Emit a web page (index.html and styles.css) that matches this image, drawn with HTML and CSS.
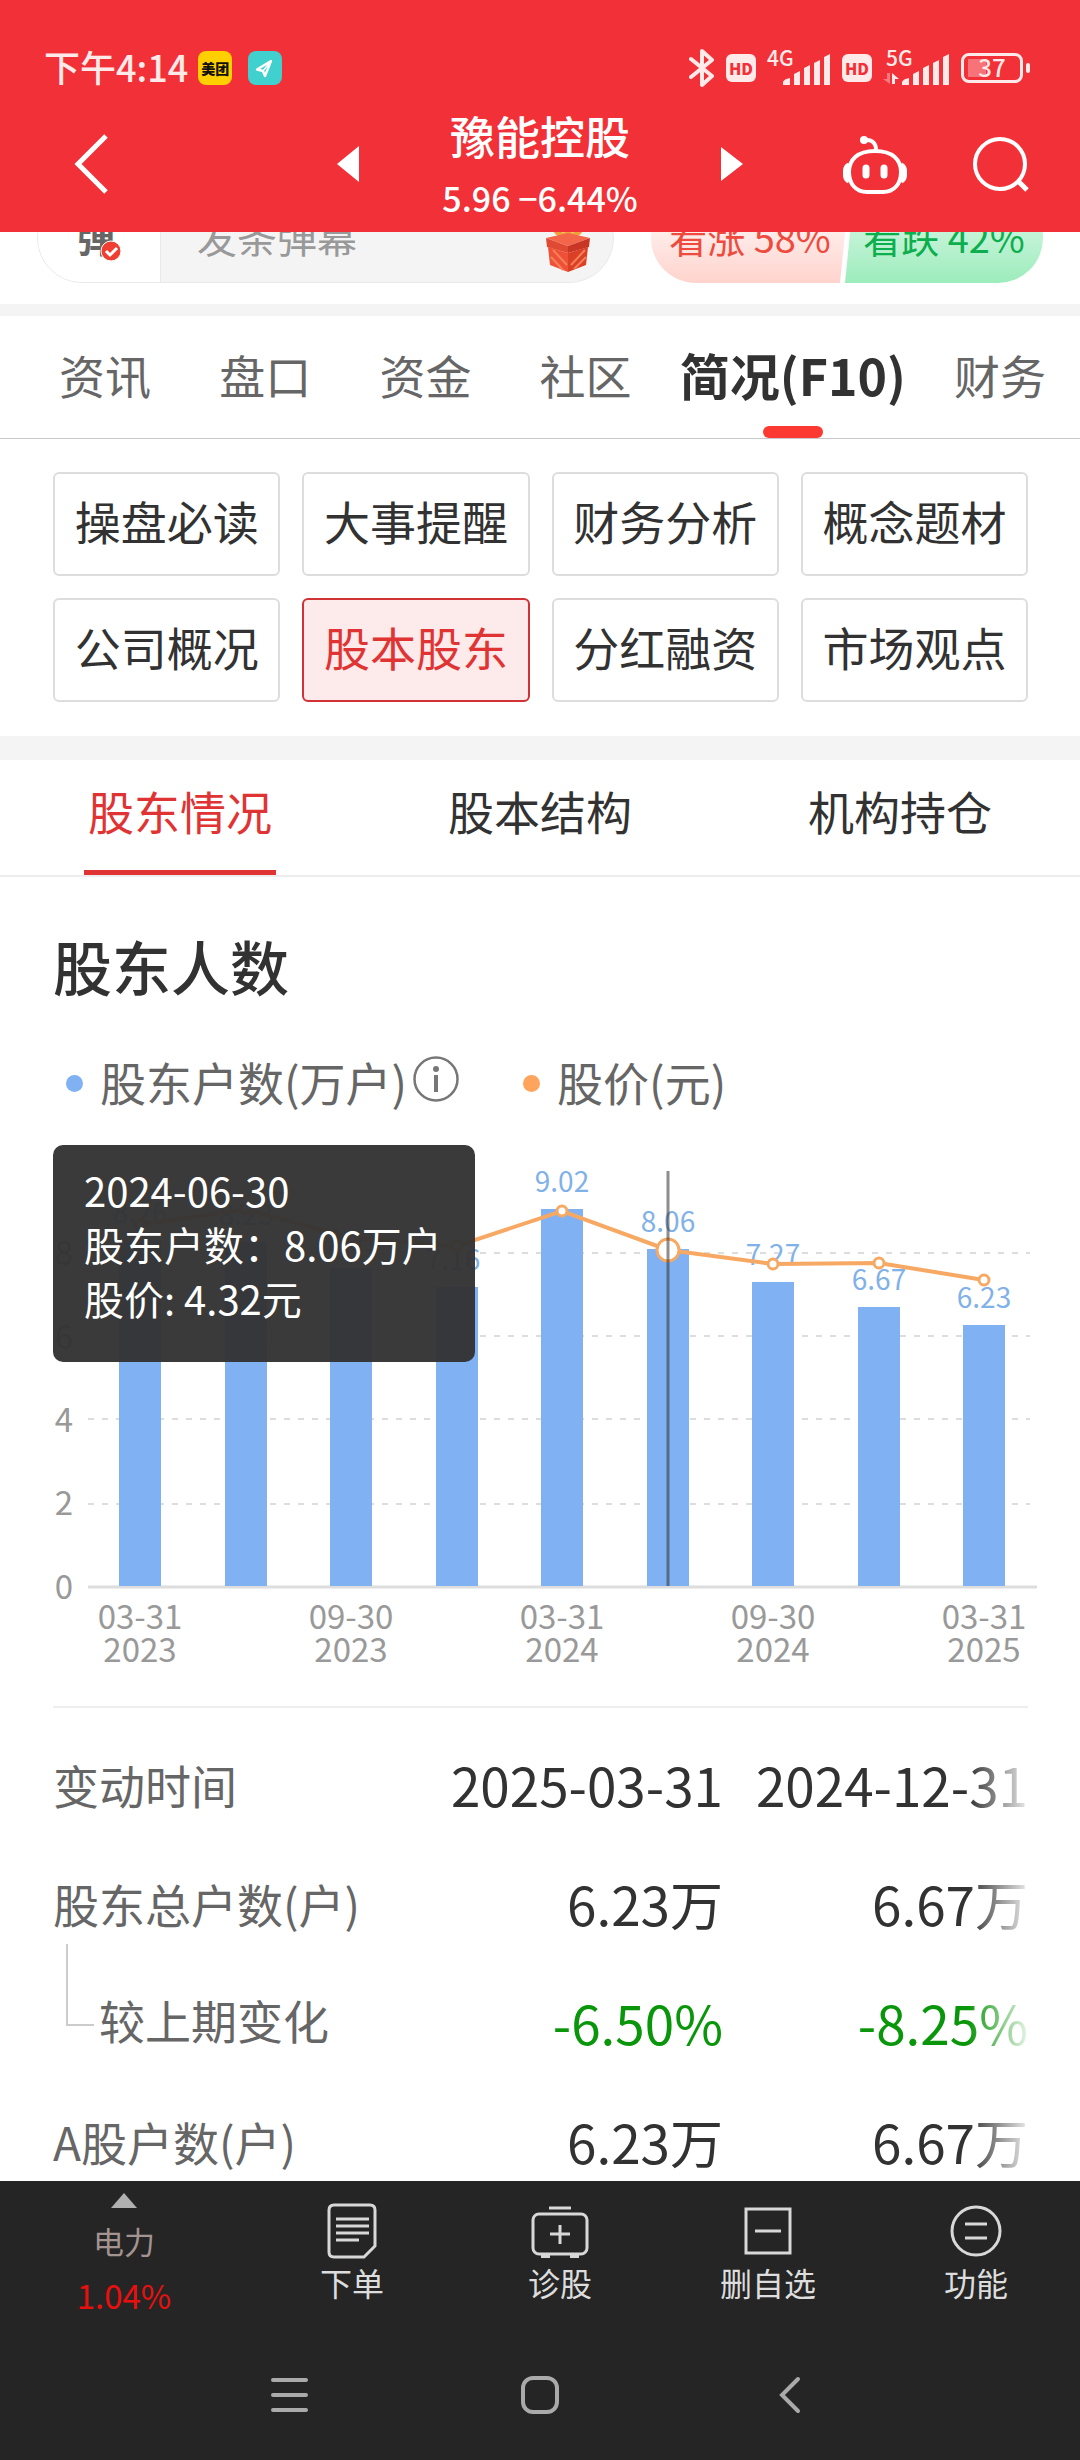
FILE: index.html
```html
<!doctype html>
<html lang="zh-CN">
<head>
	<meta charset="UTF-8">
	<meta name="viewport" content="width=device-width">
	<title>豫能控股</title>
	<link rel="stylesheet" href="styles.css">
</head>
<body>
	<div class="app">
		<header class="header">
			<div class="status">
				<div class="status-left">
					<span class="time">下午4:14</span>
					<span class="app-icon meituan">美团</span>
					<span class="app-icon plane">
						<svg width="34" height="34" viewBox="0 0 34 34"><path d="M23 10L9 18.500l6 1.500 2 5z" fill="none" stroke="#fff" stroke-width="2.400" stroke-linejoin="round"/><path d="M23 10l-8 10" stroke="#fff" stroke-width="1.500"/></svg>
					</span>
				</div>
				<div class="status-right">
					<svg width="26" height="40" viewBox="0 0 26 40"><path d="M2 11l21 17-10 9V3l10 9L2 29" fill="none" stroke="#ffe9e9" stroke-width="4" stroke-linejoin="round" stroke-linecap="round"/></svg>
					<span class="hd">HD</span>
					<svg class="signal" width="64" height="38" viewBox="0 0 64 38">
						<text x="0" y="17">4G</text>
						<path d="M16 36v-3q1-3 7-4v7zM27 36V25l6-3v14zM37 36V19l6-3v20zM47 36V14l6-3v25zM57 36V8l6-3v31z"/>
					</svg>
					<span class="hd">HD</span>
					<svg class="signal" width="67" height="38" viewBox="0 0 67 38">
						<text x="3" y="17">5G</text>
						<path d="M4 24h3v11L0 30h4z" opacity=".4"/>
						<path d="M9 35V24l7 6h-4v5z"/>
						<path d="M19 36v-3q1-3 7-4v7zM30 36V25l6-3v14zM40 36V19l6-3v20zM50 36V14l6-3v25zM60 36V8l6-3v31z"/>
					</svg>
					<span class="battery">37</span>
				</div>
			</div>
			<div class="title-bar">
				<button class="icon-btn back" aria-label="返回">
					<svg width="36" height="62" viewBox="0 0 36 62"><path d="M33 3L5 31l28 28" fill="none" stroke="#fff" stroke-width="5"/></svg>
				</button>
				<div class="stock">
					<button class="icon-btn" aria-label="上一只">
						<svg width="22" height="36" viewBox="0 0 22 36"><path d="M22 0v36L0 18z" fill="#fff"/></svg>
					</button>
					<div class="stock-info">
						<h1>豫能控股</h1>
						<p>5.96 −6.44%</p>
					</div>
					<button class="icon-btn" aria-label="下一只">
						<svg width="22" height="34" viewBox="0 0 22 34"><path d="M0 0v34l22-17z" fill="#fff"/></svg>
					</button>
				</div>
				<div class="tools">
					<button class="icon-btn" aria-label="智能助手">
						<svg width="64" height="60" viewBox="0 0 64 60" fill="none" stroke="#fff" stroke-width="4">
							<path d="M32 16C14 16 6 25 6 37s7 20 18 20h16c11 0 18-8 18-20S50 16 32 16z"/>
							<path d="M6 30c-5 2-5 14 0 16M58 30c5 2 5 14 0 16" stroke-width="5"/>
							<path d="M33 15c0-7-4-10-9-10"/>
							<circle cx="21" cy="5" r="4" fill="#fff" stroke="none"/>
							<path d="M23 33v7M41 33v7" stroke-width="7" stroke-linecap="round"/>
						</svg>
					</button>
					<button class="icon-btn" aria-label="搜索">
						<svg width="56" height="58" viewBox="0 0 56 58" fill="none" stroke="#fff" stroke-width="4"><circle cx="27" cy="29" r="25"/><path d="M45 46l9 9" stroke-width="5"/></svg>
					</button>
				</div>
			</div>
		</header>

		<main class="main">
			<div class="danmu">
				<div class="danmu-box">
					<button class="danmu-toggle" aria-label="弹幕开关">弹
						<svg class="check" width="22" height="22" viewBox="0 0 22 22"><circle cx="11" cy="11" r="10" fill="#ef3e32" stroke="#fff" stroke-width="1"/><path d="M6 11l4 4 7-7" fill="none" stroke="#fff" stroke-width="3"/></svg>
					</button>
					<input type="text" placeholder="发条弹幕" aria-label="发条弹幕">
					<svg class="gift" width="44" height="60" viewBox="0 0 44 60">
						<path d="M22 23C6 25 6 8 15 12l7 9 7-9c9-4 9 13-7 11z" fill="none" stroke="#f0a03a" stroke-width="5"/>
						<path d="M0 26l22-5 22 5-22 8z" fill="#f4664a"/>
						<path d="M0 26l22 8v7L1 35z" fill="#e04a33"/>
						<path d="M44 26l-22 8v7l21-6z" fill="#c93626"/>
						<path d="M2 35l20 6v19L4 53z" fill="#ef5138"/>
						<path d="M42 35l-20 6v19l18-7z" fill="#db3f26"/>
						<path d="M5 45l12 13M7 38l14 15M39 38L25 53M40 45L28 57" stroke="#f58057" stroke-width="2"/>
					</svg>
				</div>
				<div class="vote">
					<button class="vote-up">看涨 58%</button>
					<button class="vote-down">看跌 42%</button>
				</div>
			</div>

			<nav class="tabs">
				<a href="#">资讯</a>
				<a href="#">盘口</a>
				<a href="#">资金</a>
				<a href="#">社区</a>
				<a href="#" class="active">简况(F10)</a>
				<a href="#">财务</a>
			</nav>

			<div class="menu">
				<button>操盘必读</button>
				<button>大事提醒</button>
				<button>财务分析</button>
				<button>概念题材</button>
				<button>公司概况</button>
				<button class="active">股本股东</button>
				<button>分红融资</button>
				<button>市场观点</button>
			</div>

			<nav class="sub-tabs">
				<a href="#" class="active">股东情况</a>
				<a href="#">股本结构</a>
				<a href="#">机构持仓</a>
			</nav>

			<section class="holders">
				<h2>股东人数</h2>
				<div class="legend">
					<span class="dot blue"></span>
					<span class="label">股东户数(万户)</span>
					<button class="icon-btn info" aria-label="说明">
						<svg width="46" height="46" viewBox="0 0 46 46"><circle cx="23" cy="23" r="21.500" fill="none" stroke="#777" stroke-width="2.500"/><circle cx="23" cy="13" r="3" fill="#777"/><path d="M23 19v17" stroke="#777" stroke-width="4"/></svg>
					</button>
					<span class="dot orange"></span>
					<span class="label">股价(元)</span>
				</div>

				<div class="chart">
					<svg viewBox="0 0 1080 540">
						<g class="grid">
							<path d="M88 108h942M88 191h942M88 274h942M88 359h942"/>
						</g>
						<path class="axis" d="M88 442h949"/>
						<g class="bars">
							<rect x="119" y="95" width="42" height="346"/>
							<rect x="225" y="97" width="42" height="344"/>
							<rect x="330" y="123" width="42" height="318"/>
							<rect x="436" y="142" width="42" height="299"/>
							<rect x="541" y="64" width="42" height="377"/>
							<rect x="647" y="104" width="42" height="337"/>
							<rect x="752" y="137" width="42" height="304"/>
							<rect x="858" y="162" width="42" height="279"/>
							<rect x="963" y="180" width="42" height="261"/>
						</g>
						<g class="values">
							<text x="140" y="78">8.26</text>
							<text x="246" y="80">8.23</text>
							<text x="351" y="106">7.61</text>
							<text x="453" y="125">7.16</text>
							<text x="562" y="47">9.02</text>
							<text x="668" y="87">8.06</text>
							<text x="773" y="120">7.27</text>
							<text x="879" y="145">6.67</text>
							<text x="984" y="163">6.23</text>
						</g>
						<g class="price">
							<polyline points="140,80 246,64 351,93 457,101 562,66 668,105 773,119 879,118 984,135"/>
							<circle cx="140" cy="80" r="5"/>
							<circle cx="246" cy="64" r="5"/>
							<circle cx="351" cy="93" r="5"/>
							<circle cx="457" cy="101" r="5"/>
							<circle cx="562" cy="66" r="5"/>
							<circle cx="668" cy="105" r="11"/>
							<circle cx="773" cy="119" r="5"/>
							<circle cx="879" cy="118" r="5"/>
							<circle cx="984" cy="135" r="5"/>
						</g>
						<path class="cursor" d="M668 26v415"/>
						<g class="y-labels">
							<text x="73" y="120">8</text>
							<text x="73" y="204">6</text>
							<text x="73" y="287">4</text>
							<text x="73" y="370">2</text>
							<text x="73" y="454">0</text>
						</g>
						<g class="x-labels">
							<text x="140" y="484">03-31</text><text x="140" y="517">2023</text>
							<text x="351" y="484">09-30</text><text x="351" y="517">2023</text>
							<text x="562" y="484">03-31</text><text x="562" y="517">2024</text>
							<text x="773" y="484">09-30</text><text x="773" y="517">2024</text>
							<text x="984" y="484">03-31</text><text x="984" y="517">2025</text>
						</g>
					</svg>
					<div class="tooltip">
						<p>2024-06-30</p>
						<p>股东户数：8.06万户</p>
						<p>股价: 4.32元</p>
					</div>
				</div>

				<div class="table-wrap">
					<table>
						<thead>
							<tr><th scope="col">变动时间</th><td>2025-03-31</td><td>2024-12-31</td></tr>
						</thead>
						<tbody>
							<tr><th scope="row">股东总户数(户)</th><td>6.23万</td><td>6.67万</td></tr>
							<tr class="child"><th scope="row">较上期变化</th><td>-6.50%</td><td>-8.25%</td></tr>
							<tr><th scope="row">A股户数(户)</th><td>6.23万</td><td>6.67万</td></tr>
						</tbody>
					</table>
				</div>
			</section>
		</main>

		<footer class="footer">
			<div class="actions">
				<button class="sector">
					<svg width="26" height="15" viewBox="0 0 26 15"><path d="M13 0l13 15H0z" fill="#b0b0b0"/></svg>
					<span class="name">电力</span>
					<span class="rate">1.04%</span>
				</button>
				<button>
					<svg width="50" height="56" viewBox="0 0 50 56"><path d="M7 2h36q5 0 5 5v36L37 54H7q-5 0-5-5V7q0-5 5-5z"/><path d="M9 16h33M9 23h33M9 30h33M9 37h23"/></svg>
					<span>下单</span>
				</button>
				<button>
					<svg width="58" height="56" viewBox="0 0 58 56"><rect x="2" y="11" width="54" height="40" rx="6"/><path d="M18 5h22M29 22v19M19 31h20"/><path d="M10 53h9M39 53h9" stroke-width="4"/></svg>
					<span>诊股</span>
				</button>
				<button>
					<svg width="50" height="56" viewBox="0 0 50 56"><rect x="3" y="6" width="44" height="44"/><path d="M12 28h26"/></svg>
					<span>删自选</span>
				</button>
				<button>
					<svg width="52" height="56" viewBox="0 0 52 56"><circle cx="26" cy="28" r="24"/><path d="M15 21h22M15 35h22"/></svg>
					<span>功能</span>
				</button>
			</div>
			<div class="sys-nav">
				<button class="icon-btn" aria-label="最近任务"><svg width="40" height="40" viewBox="0 0 40 40"><path d="M3 5h33M3 20h33M3 35h33"/></svg></button>
				<button class="icon-btn" aria-label="主页"><svg width="40" height="40" viewBox="0 0 40 40"><rect x="3" y="3" width="34" height="34" rx="10"/></svg></button>
				<button class="icon-btn" aria-label="返回上级"><svg width="40" height="40" viewBox="0 0 40 40"><path d="M28 4L12 20l16 16"/></svg></button>
			</div>
		</footer>
	</div>
</body>
</html>
```

FILE: styles.css
```css
* {
	box-sizing: border-box;
	margin: 0;
	padding: 0;
}
body {
	font-family: "Noto Sans CJK SC", "Noto Sans", sans-serif;
	color: #323232;
	background-color: #fff;
}
a {
	color: inherit;
	text-decoration: none;
}
button {
	font: inherit;
	color: inherit;
	border: 0;
	background: none;
	cursor: pointer;
}
svg {
	display: block;
	flex: none;
}
.icon-btn {
	display: flex;
}
.app {
	display: flex;
	flex-direction: column;
	height: 100vh;
}

/* 顶部 */
.header {
	flex: none;
	background-color: #f23037;
	color: #fff;
}
.status {
	display: flex;
	justify-content: space-between;
	align-items: center;
	height: 96px;
	padding: 40px 50px 0 44px;
	color: #ffe9e9;
}
.status-left,
.status-right {
	display: flex;
	align-items: center;
}
.status-right {
	gap: 11px;
}
.time {
	margin-right: 10px;
	font-size: 36px;
	font-weight: 500;
	line-height: 52px;
	padding-bottom: 4px;
}
.app-icon {
	width: 34px;
	height: 34px;
	margin-right: 16px;
	border-radius: 8px;
	overflow: hidden;
}
.meituan {
	background-color: #ffd000;
	color: #111;
	font-size: 14px;
	font-weight: 900;
	line-height: 34px;
	text-align: center;
}
.plane {
	background-color: #40d0ce;
}
.hd {
	width: 30px;
	height: 28px;
	border-radius: 6px;
	background-color: #ffe9e9;
	color: #f23037;
	font-size: 16px;
	font-weight: 900;
	line-height: 28px;
	text-align: center;
}
.signal {
	overflow: visible;
	fill: #ffe9e9;
	font-size: 21px;
	font-weight: 500;
}
.battery {
	position: relative;
	width: 62px;
	height: 30px;
	margin-right: 7px;
	border: 3px solid #ffe9e9;
	border-radius: 8px;
	background: linear-gradient(#f87378, #f87378) 4px 3px / 18px 18px no-repeat;
	font-size: 24px;
	font-weight: 500;
	line-height: 22px;
	text-align: center;
}
.battery::after {
	content: "";
	position: absolute;
	right: -10px;
	top: 7px;
	width: 4px;
	height: 10px;
	border-radius: 2px;
	background-color: #ffe9e9;
}
.title-bar {
	display: grid;
	grid-template-columns: 1fr 406px 1fr;
	align-items: center;
	height: 136px;
}
.back {
	padding-left: 73px;
}
.stock {
	display: flex;
	justify-content: space-between;
	align-items: center;
}
.stock-info {
	padding-top: 6px;
	text-align: center;
}
.stock-info h1 {
	font-size: 45px;
	font-weight: 500;
	line-height: 62px;
}
.stock-info p {
	font-size: 34px;
	font-weight: 500;
	line-height: 62px;
}
.tools {
	display: flex;
	justify-content: flex-end;
	gap: 66px;
	padding: 2px 51px 0 0;
}

.main {
	flex: 1;
	min-height: 0;
	overflow-y: auto;
	scrollbar-width: none;
}

/* 弹幕 滚动到一半 */
.danmu {
	display: flex;
	justify-content: space-between;
	margin-top: -39px;
	padding: 0 37px 21px;
	border-bottom: 12px solid #f4f4f4;
}
.danmu-box {
	display: flex;
	width: 577px;
	height: 90px;
	border: 1px solid #e9e9e9;
	border-radius: 45px;
	background-color: #f4f4f4;
	overflow: hidden;
}
.danmu-toggle {
	position: relative;
	width: 123px;
	padding: 0 6px 6px 0;
	border-right: 1px solid #e9e9e9;
	background-color: #fff;
	color: #666;
	font-size: 38px;
	font-weight: 700;
	text-align: center;
}
.check {
	position: absolute;
	left: 62px;
	top: 46px;
}
.danmu-box input {
	flex: 1;
	min-width: 0;
	padding: 0 0 4px 36px;
	border: 0;
	outline: 0;
	background: none;
	font: inherit;
	font-size: 40px;
}
.danmu-box input::placeholder {
	color: #999;
}
.gift {
	margin: 18px 23px 0 0;
}
.vote {
	display: flex;
	width: 392px;
	height: 90px;
	border-radius: 45px;
	overflow: hidden;
	font-size: 38px;
}
.vote button {
	flex: 1;
	padding-bottom: 4px;
	white-space: nowrap;
}
.vote-up {
	margin-right: -4px;
	background: linear-gradient(#fff, #ffd3cd);
	color: #ee4a3e;
	clip-path: polygon(0 0, 100% 0, calc(100% - 9px) 100%, 0 100%);
}
.vote-down {
	background: linear-gradient(#e4f9ec, #9cecbc);
	color: #0cae4e;
	clip-path: polygon(9px 0, 100% 0, 100% 100%, 0 100%);
}

/* 主导航 */
.tabs {
	display: flex;
	justify-content: space-between;
	height: 123px;
	padding: 0 34px 0 59px;
	border-bottom: 1px solid #c8c8c8;
	color: #666;
	font-size: 46px;
	line-height: 116px;
	white-space: nowrap;
}
.tabs .active {
	position: relative;
	margin: 0 -20px;
	color: #323232;
	font-size: 50px;
	font-weight: 700;
}
.tabs .active::after {
	content: "";
	position: absolute;
	left: 50%;
	bottom: 0;
	width: 60px;
	height: 12px;
	margin-left: -30px;
	border-radius: 6px;
	background-color: #fc3a32;
}

.menu {
	display: grid;
	grid-template-columns: repeat(4, 1fr);
	gap: 22px;
	padding: 33px 52px 34px 53px;
	border-bottom: 24px solid #f4f4f4;
}
.menu button {
	height: 104px;
	padding-bottom: 8px;
	border: 2px solid #ddd;
	border-radius: 6px;
	font-size: 46px;
	line-height: 92px;
	white-space: nowrap;
}
.menu .active {
	border-color: #d03236;
	background-color: #fdeaea;
	color: #e03434;
}

.sub-tabs {
	display: grid;
	grid-template-columns: repeat(3, 1fr);
	justify-items: center;
	border-bottom: 2px solid #ededed;
	font-size: 46px;
	line-height: 100px;
}
.sub-tabs a {
	padding: 0 4px 10px;
	border-bottom: 5px solid transparent;
}
.sub-tabs .active {
	border-color: #e03434;
	color: #e03434;
}

/* 股东人数 */
.holders {
	padding-top: 53px;
}
.holders h2 {
	padding-left: 53px;
	font-size: 59px;
	font-weight: 500;
	line-height: 72px;
}
.legend {
	display: flex;
	align-items: center;
	margin: 51px 0 32px;
	padding-left: 66px;
	color: #666;
	font-size: 46px;
}
.legend .label {
	padding-bottom: 4px;
	line-height: 56px;
}
.dot {
	width: 17px;
	height: 17px;
	margin-right: 17px;
	border-radius: 50%;
}
.blue {
	background-color: #80b1f2;
}
.orange {
	background-color: #ffa45c;
}
.info {
	margin: 0 64px 8px 6px;
}
.chart {
	position: relative;
}
.chart svg {
	width: 100%;
}
.grid path {
	stroke: #ddd;
	stroke-width: 2;
	stroke-dasharray: 6 8;
}
.axis {
	stroke: #ddd;
	stroke-width: 3;
}
.bars {
	fill: #80b1f2;
}
.values {
	fill: #80b1e8;
	font-size: 28px;
	text-anchor: middle;
}
.price {
	fill: #fff;
	stroke: #f7a964;
	stroke-width: 3;
}
.price polyline {
	fill: none;
	stroke-width: 4;
}
.cursor {
	stroke: rgba(50, 50, 50, .55);
	stroke-width: 3;
}
.y-labels,
.x-labels {
	fill: #999;
	font-size: 33px;
}
.y-labels {
	text-anchor: end;
}
.x-labels {
	text-anchor: middle;
}
.tooltip {
	position: absolute;
	left: 53px;
	top: 0;
	padding: 18px 33px 37px 31px;
	border-radius: 10px;
	background-color: rgba(50, 50, 50, .96);
	color: #fff;
	font-size: 40px;
	line-height: 54px;
	white-space: nowrap;
}

.table-wrap {
	position: relative;
	margin: 21px 52px 0 53px;
	padding-top: 16px;
	border-top: 2px solid #eee;
}
/* 右侧渐隐 提示可以横向滚动 */
.table-wrap::after {
	content: "";
	position: absolute;
	right: 0;
	top: 0;
	width: 60px;
	height: 100%;
	background: linear-gradient(to right, rgba(255, 255, 255, 0), rgba(255, 255, 255, .9));
}
table {
	width: 100%;
	border-collapse: collapse;
	table-layout: fixed;
}
tr {
	height: 119px;
}
th {
	position: relative;
	color: #666;
	font-size: 46px;
	font-weight: 400;
	text-align: left;
	white-space: nowrap;
}
td {
	width: 305px;
	font-size: 53px;
	text-align: right;
	white-space: nowrap;
}
.child th {
	padding: 0 0 6px 46px;
}
.child th::before {
	content: "";
	position: absolute;
	left: 13px;
	top: -18px;
	width: 26px;
	height: 80px;
	border-left: 2px solid #ccc;
	border-bottom: 2px solid #ccc;
}
.child td {
	color: #0a960a;
}

/* 底部 */
.footer {
	flex: none;
	background-color: #252525;
	color: #ddd;
}
.actions {
	display: grid;
	grid-template-columns: 248px repeat(4, 1fr);
	height: 149px;
	font-size: 32px;
	line-height: 42px;
}
.actions button {
	display: flex;
	flex-direction: column;
	align-items: center;
	gap: 2px;
	padding-top: 22px;
}
.actions svg {
	fill: none;
	stroke: #d8d8d8;
	stroke-width: 3;
}
.actions .sector {
	gap: 15px;
	padding-top: 12px;
}
.sector svg {
	stroke: none;
}
.name {
	color: #a39391;
	font-size: 31px;
	line-height: 36px;
}
.rate {
	color: #e8100f;
	font-size: 33px;
}
.sys-nav {
	display: flex;
	justify-content: center;
	align-items: center;
	gap: 210px;
	height: 130px;
}
.sys-nav svg {
	fill: none;
	stroke: #aaa;
	stroke-width: 4;
	stroke-linecap: round;
}
```
